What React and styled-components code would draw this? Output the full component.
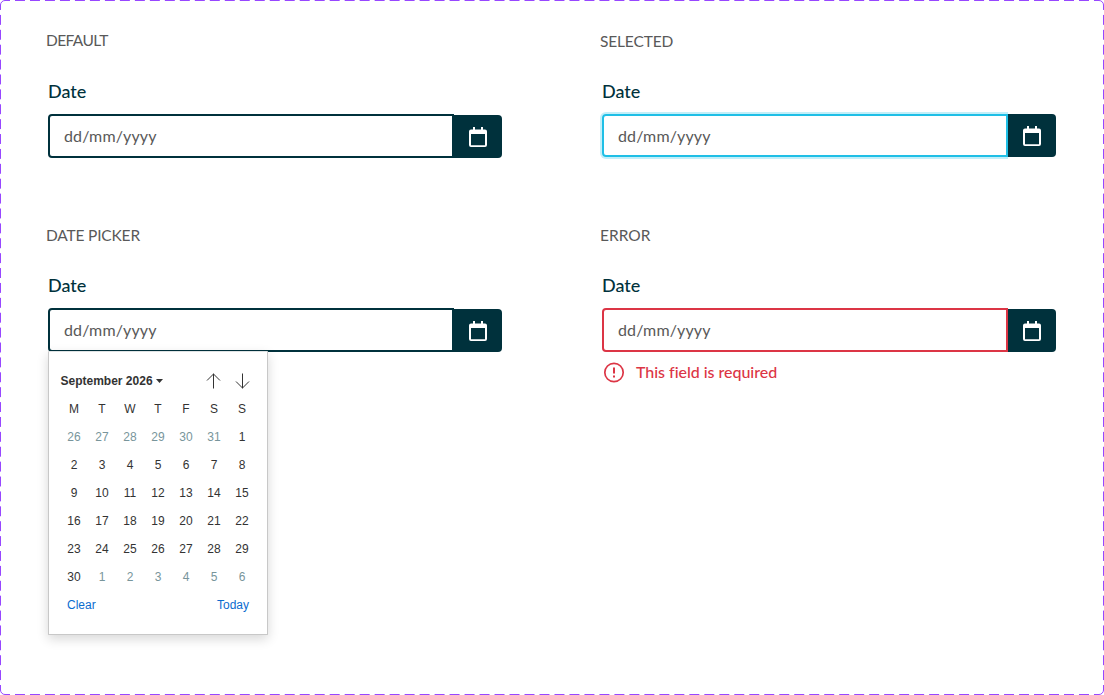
import React from "react";
import styled, { createGlobalStyle, css } from "styled-components";

const GlobalStyle = createGlobalStyle`
  * { box-sizing: border-box; }
  body { margin: 0; background: #fff; }
`;

const Frame = styled.main`
  position: relative;
  width: 1104px;
  height: 695px;
  overflow: hidden;
  background: #fff;
  font-family: Lato, "Liberation Sans", sans-serif;
`;

const FrameOutline = styled.svg`
  position: absolute;
  inset: 0;
  pointer-events: none;
`;

const Grid = styled.div`
  display: grid;
  grid-template-columns: 554px 456px;
  grid-template-rows: 194px auto;
  padding: 29px 0 0 46px;
`;

const Example = styled.section`
  display: flex;
  flex-direction: column;
`;

const Title = styled.h2`
  margin: 0;
  padding-top: ${(p) => p.$drop || 0}px;
  height: 50px;
  font-size: 15.5px;
  font-weight: 400;
  line-height: 22px;
  letter-spacing: ${(p) => p.$tracking || 0}px;
  color: #595959;
  white-space: nowrap;
`;

const Field = styled.div`
  position: relative;
  width: 454px;
  margin-left: 2px;
`;

const Label = styled.label`
  display: block;
  height: 35px;
  font-size: 18px;
  font-weight: 500;
  line-height: 24px;
  letter-spacing: -0.05px;
  color: #00313c;
`;

const tones = {
  default: css`border-color: #00313c;`,
  selected: css`
    border-color: #1fbfe6;
    box-shadow: 0 0 0 2px #c3eff9;
    clip-path: inset(-2px 0 -2px -2px);
    height: 43px;
  `,
  error: css`border-color: #dc3545;`,
};

const InputRow = styled.div`
  display: flex;
  height: 44px;
`;

const Input = styled.div`
  width: 406px;
  height: 44px;
  padding: 0 14px;
  border: 2px solid;
  border-radius: 4px 0 0 4px;
  font-size: 16px;
  line-height: 40px;
  letter-spacing: 0.14px;
  color: #595959;
  ${(p) => tones[p.$tone]}
`;

const buttonOffsets = {
  default: "0.5px 0 0 -2px",
  selected: "0",
  error: "0.5px 0 0",
};

const PickerButton = styled.button`
  display: flex;
  align-items: center;
  justify-content: center;
  width: ${(p) => (p.$tone === "default" ? 50 : 48)}px;
  height: 43px;
  margin: ${(p) => buttonOffsets[p.$tone]};
  padding: ${(p) => (p.$tone === "default" ? "1px 0 0 1px" : p.$tone === "error" ? "1px 1px 0 0" : "0 1px 0 0")};
  border: 0;
  border-radius: 0 4px 4px 0;
  background: #00313c;
  z-index: 1;
`;

const ErrorMessage = styled.div`
  display: flex;
  align-items: center;
  gap: 11px;
  margin-top: 9px;
  padding-left: 1px;
  font-size: 16px;
  font-weight: 500;
  line-height: 22px;
  letter-spacing: -0.03px;
  color: #dc3545;
  white-space: nowrap;
`;

const Popup = styled.div`
  position: absolute;
  top: 78px;
  left: 0;
  width: 220px;
  height: 284px;
  padding: 15px 11px;
  border: 1px solid #c8c8c8;
  border-top-color: #dfe3e4;
  border-radius: 1px;
  background: #fff;
  box-shadow: 0 4px 12px rgba(0, 0, 0, 0.16);
  font-family: "Liberation Sans", Arial, sans-serif;
  font-size: 12px;
  line-height: 28px;
  color: #333;
  z-index: 2;
`;

const PopupHeader = styled.div`
  display: flex;
  align-items: center;
  height: 28px;
  padding-left: 0.5px;
`;

const Month = styled.strong`
  display: flex;
  align-items: center;
  gap: 3px;
  margin-right: auto;
  font-weight: 700;
`;

const Steps = styled.div`
  display: flex;
  gap: 13px;
  padding-right: 6px;
`;

const Days = styled.div`
  display: grid;
  grid-template-columns: repeat(7, 28px);
  grid-auto-rows: 28px;
  text-align: center;
`;

const Day = styled.span`
  color: ${(p) => (p.$outside ? "#78959b" : "#333")};
`;

const PopupFooter = styled.div`
  display: flex;
  justify-content: space-between;
  padding: 0 7px;
`;

const Action = styled.a`
  color: #0b6ccf;
`;

const CalendarIcon = () => (
  <svg width="18" height="20" viewBox="0 0 18 20">
    <path
      fill="#fff"
      fillRule="evenodd"
      d="M4 0h2v2.500h6V0h2v2.500h2a2 2 0 0 1 2 2V18a2 2 0 0 1-2 2H2a2 2 0 0 1-2-2V4.500a2 2 0 0 1 2-2h2zM2 7v11.200h14V7z"
    />
  </svg>
);

const AlertIcon = () => (
  <svg width="22" height="22" viewBox="0 0 22 22" fill="none" stroke="#dc3545" strokeWidth="2">
    <circle cx="11" cy="11.500" r="9.2" strokeWidth="1.7" />
    <path d="M11 6.500v6M11 14.500v2" />
  </svg>
);

const StepArrow = ({ down }) => (
  <svg width="16" height="16" viewBox="0 0 16 16" fill="none" stroke="#333" strokeWidth="1">
    <path d={down ? "M8.5 .5v15M2 8.5l6.5 6.5 6.5-6.5" : "M8.5 15.5V.5M2 7.5L8.5 1l6.5 6.5"} />
  </svg>
);

const weekdays = ["M", "T", "W", "T", "F", "S", "S"];
const days = [
  ...[26, 27, 28, 29, 30, 31].map((n) => ({ n, outside: true })),
  ...Array.from({ length: 30 }, (_, i) => ({ n: i + 1, outside: false })),
  ...[1, 2, 3, 4, 5, 6].map((n) => ({ n, outside: true })),
];

const DatePopup = () => (
  <Popup>
    <PopupHeader>
      <Month>
        September 2026
        <svg width="7" height="4" viewBox="0 0 7 4"><path d="M0 0h7L3.5 4z" fill="#333" /></svg>
      </Month>
      <Steps>
        <StepArrow />
        <StepArrow down />
      </Steps>
    </PopupHeader>
    <Days>
      {weekdays.map((d, i) => <Day key={`w${i}`}>{d}</Day>)}
      {days.map((d, i) => <Day key={i} $outside={d.outside}>{d.n}</Day>)}
    </Days>
    <PopupFooter>
      <Action>Clear</Action>
      <Action>Today</Action>
    </PopupFooter>
  </Popup>
);

const DateField = ({ title, tone = "default", drop, tracking, open, error }) => (
  <Example>
    <Title $drop={drop} $tracking={tracking}>{title}</Title>
    <Field>
      <Label>Date</Label>
      <InputRow>
        <Input $tone={tone}>dd/mm/yyyy</Input>
        <PickerButton $tone={tone} aria-label="Open calendar"><CalendarIcon /></PickerButton>
      </InputRow>
      {open && <DatePopup />}
      {error && <ErrorMessage><AlertIcon />{error}</ErrorMessage>}
    </Field>
  </Example>
);

export default function App() {
  return (
    <Frame>
      <GlobalStyle />
      <FrameOutline width="1104" height="695" fill="none" stroke="#9747ff">
        <path d="M5 .5H1099M5 694.5H1099" strokeDasharray="9.99 4.996" strokeDashoffset="4.995" />
        <path d="M.5 5V690M1103.5 5V690" strokeDasharray="9.93 4.961" strokeDashoffset="4.965" />
        <path d="M.5 5A4.5 4.5 0 0 1 5 .5M1099 .5a4.5 4.5 0 0 1 4.5 4.5M1103.5 690a4.5 4.5 0 0 1-4.5 4.5M5 694.5A4.5 4.5 0 0 1 .5 690" />
      </FrameOutline>
      <Grid>
        <DateField title="DEFAULT" tracking={-0.6} />
        <DateField title="SELECTED" tone="selected" drop={1} tracking={-0.15} />
        <DateField title="DATE PICKER" drop={1} tracking={-0.18} open />
        <DateField title="ERROR" tone="error" drop={1} error="This field is required" />
      </Grid>
    </Frame>
  );
}
